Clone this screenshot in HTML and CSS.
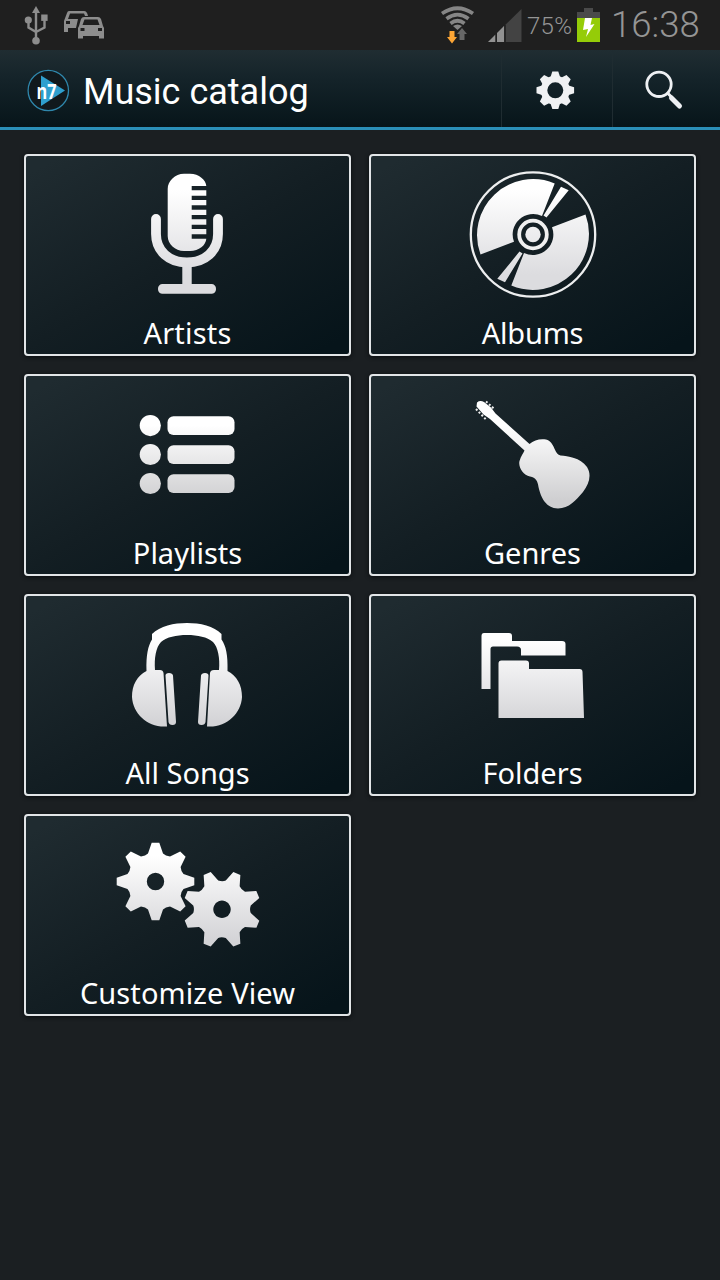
FILE: index.html
```html
<!DOCTYPE html>
<html lang="en">
<head>
<meta charset="utf-8">
<title>Music catalog</title>
<link rel="stylesheet" href="styles.css">
</head>
<body>
<svg class="defs" width="0" height="0" aria-hidden="true">
  <defs>
    <path id="gear" fill-rule="evenodd" d="M28-7.500L38.800-3.800V3.800L28 7.500Q25.500 10 25.100 14.500L30.100 24.700L24.700 30.100L14.500 25.100Q10 25.500 7.500 28L3.800 38.800H-3.800L-7.500 28Q-10 25.500-14.500 25.100L-24.700 30.100L-30.100 24.700L-25.100 14.500Q-25.500 10-28 7.500L-38.800 3.800V-3.800L-28-7.500Q-25.500-10-25.100-14.500L-30.100-24.700L-24.700-30.100L-14.500-25.100Q-10-25.500-7.500-28L-3.800-38.800H3.800L7.500-28Q10-25.500 14.500-25.100L24.700-30.100L30.100-24.700L25.100-14.500Q25.500-10 28-7.500ZM8.700 0A8.700 8.700 0 1 0-8.700 0A8.700 8.700 0 1 0 8.700 0Z"/>
    <linearGradient id="g1" gradientUnits="userSpaceOnUse" x1="0" y1="190" x2="0" y2="275"><stop offset="0" stop-color="#fff"/><stop offset="1" stop-color="#dcdcdf"/></linearGradient>
    <linearGradient id="g2" gradientUnits="userSpaceOnUse" x1="0" y1="425" x2="0" y2="500"><stop offset="0" stop-color="#fff"/><stop offset="1" stop-color="#cfcfd1"/></linearGradient>
    <linearGradient id="g3" gradientUnits="userSpaceOnUse" x1="0" y1="640" x2="0" y2="722"><stop offset="0" stop-color="#fff"/><stop offset="1" stop-color="#d4d4d7"/></linearGradient>
    <linearGradient id="g4" gradientUnits="userSpaceOnUse" x1="0" y1="-26" x2="0" y2="60"><stop offset="0" stop-color="#fff"/><stop offset="1" stop-color="#d3d3d6"/></linearGradient>
    <linearGradient id="g5" gradientUnits="userSpaceOnUse" x1="0" y1="-54" x2="0" y2="32" gradientTransform="rotate(-22.5)"><stop offset="0" stop-color="#fff"/><stop offset="1" stop-color="#d3d3d6"/></linearGradient>
  </defs>
</svg>

<header class="status-bar">
  <svg class="status-left" width="120" height="50" viewBox="0 0 120 50" aria-hidden="true">
    <g fill="none" stroke="#8d8d8d" stroke-width="2.4"><path d="M36 10V40M28.5 22V27.500L36 32M44.500 19V27.500L36 32"/></g>
    <g fill="#8d8d8d"><path d="M36 6L40 13H32Z"/><circle cx="28.3" cy="20" r="3.600"/><rect x="41.200" y="14.500" width="6.400" height="6.400"/><circle cx="36" cy="40.800" r="3.800"/></g>
    <path fill="#8d8d8d" fill-rule="evenodd" d="M69 11H84Q87 11 88 16H85L84 13.500H70L68 19H78L76 28H68V32H64V21L67 13Q67.500 11 69 11ZM66 21V24H70V21Z"/>
    <path fill="#8d8d8d" fill-rule="evenodd" d="M84 17H98Q100 17 101 19L103 26L104 28V38.500H99V36H83V38.500H78V28L79 26L81 19Q82 17 84 17ZM84.500 19.500L82.500 25H99.500L97.500 19.500ZM80.500 28V31H84.500V28ZM98 28V31H102V28Z"/>
  </svg>
  <div class="status-right">
    <svg width="86" height="50" viewBox="438 0 86 50" aria-hidden="true">
      <g fill="none" stroke="#858585" stroke-width="3.700"><path d="M442 13.500Q457.500 3 473 13.500M446.500 18.800Q457.500 10.500 468.500 18.800M450.500 23.500Q457.500 18 464.500 23.500"/></g>
      <path fill="#858585" d="M453 26Q457.500 23 462 26L457.500 30Z"/>
      <path fill="#fca535" d="M449.500 31H454.500V37H457L452 43.500L447 37H449.500Z"/>
      <path fill="#686868" d="M462 28L467 34H464.500V40H459.500V34H457Z"/>
      <path fill="#434343" d="M488 42L521.500 9V42Z"/>
      <path fill="#929292" d="M488 42L495.500 34.500V42ZM497 42V33L504 26V42Z"/><path stroke="#1f1f1f" stroke-width="1.500" d="M496.200 33V42M505 25V42"/>
    </svg>
    <span class="percent">75%</span>
    <svg class="battery" width="24" height="50" viewBox="576 0 24 50" aria-hidden="true">
      <path fill="#4a4a4a" d="M584 8H593V12H600V18H577V12H584Z"/><path fill="#95cc08" d="M577 18H600V42H577Z"/>
      <path fill="#fff" d="M585 18H592L590.500 25L594.500 24L586 37L588 29L583 30Z"/>
    </svg>
    <span class="clock">16:38</span>
  </div>
</header>

<nav class="action-bar">
  <svg class="logo" width="44" height="44" viewBox="26 68 44 44" aria-label="n7">
    <circle cx="48.300" cy="90.500" r="20.200" fill="#11191d" stroke="#2f87ac" stroke-width="1.300"/>
    <path d="M41 75.500L65 90.500L41 106Z" fill="#2f9fce"/>
    <text class="logo-text" x="36.500" y="98.500" textLength="20" lengthAdjust="spacingAndGlyphs">n7</text>
  </svg>
  <h1 class="title">Music catalog</h1>
  <button class="action" aria-label="Settings">
    <svg width="110" height="76" viewBox="502 51 110 76">
      <g transform="translate(555.300 90.300)" fill="#f0f1f3">
        <path fill-rule="evenodd" d="M14.500 0A14.500 14.500 0 1 0-14.500 0A14.500 14.500 0 1 0 14.500 0ZM8 0A8 8 0 1 1-8 0A8 8 0 1 1 8 0Z"/>
        <g id="pair"><path id="nub" d="M-5-12.500L-3-18.800H3L5-12.500Z"/><use href="#nub" transform="rotate(45)"/><use href="#nub" transform="rotate(90)"/><use href="#nub" transform="rotate(135)"/></g>
        <use href="#pair" transform="rotate(180)"/>
      </g>
    </svg>
  </button>
  <button class="action search" aria-label="Search">
    <svg width="107" height="76" viewBox="613 51 107 76" fill="none" stroke="#eef0f3" stroke-linecap="round">
      <circle cx="659" cy="84.300" r="12.200" stroke-width="2.800"/><path stroke-width="3" d="M668 93.500L671 96.500"/><path stroke-width="5" d="M671.500 98L679.500 106"/>
    </svg>
  </button>
</nav>

<main class="grid">
  <a class="tile">
    <svg class="icon" viewBox="26 156 323 160" fill="url(#g1)">
      <path d="M184 173.700H190C199 173.700 206 180 206.300 186H191.700V190.300H206.300V195.700H191.700V200H206.300V205.300H191.700V209.700H206.300V215H191.700V219.300H206.300V224.700H191.700V229H206.300V234.300H191.700V238.700H206.300C206 245 199 251 190 251H184C175 251 167.700 244 167.700 236V189C167.700 181 175 173.700 184 173.700Z"/>
      <path fill="none" stroke="url(#g1)" stroke-width="9.800" stroke-linecap="round" d="M156 219V234C156 251 169 262.500 187 262.500S218 251 218 234V219"/>
      <path d="M182.300 264H191.700V284H212A5 5 0 0 1 212 293.800H162A5 5 0 0 1 162 284H182.300Z"/>
    </svg>
    <span class="label artists">Artists</span>
  </a>
  <a class="tile">
    <svg class="icon" viewBox="371 156 323 160" fill="url(#g1)">
      <circle cx="533" cy="234.500" r="62.200" fill="none" stroke="#edeeef" stroke-width="2.300"/>
      <path d="M554.700 183.500A56 56 0 0 0 480.500 254.500L514 241.800A20.500 20.500 0 0 1 542 216ZM511.300 285.500A56 56 0 0 0 585.500 214.500L552 227.200A20.500 20.500 0 0 1 524 253Z"/>
      <path d="M561 186.800L568.700 190.200L546.500 217.500L543.500 215.500ZM505 282.200L497.300 278.800L519.500 251.500L522.500 253.500Z"/>
      <circle cx="533" cy="234.500" r="13.800" fill="none" stroke="#f0f0f0" stroke-width="3.800"/><circle cx="533" cy="234.500" r="7.700"/>
    </svg>
    <span class="label albums">Albums</span>
  </a>
  <a class="tile">
    <svg class="icon" viewBox="26 376 323 160" fill="url(#g2)">
      <circle cx="150.300" cy="425.600" r="10.600"/><circle cx="150.300" cy="454.500" r="10.600"/><circle cx="150.300" cy="483.500" r="10.600"/>
      <rect x="167.500" y="416.300" width="67" height="18.700" rx="6"/><rect x="167.500" y="445.200" width="67" height="18.700" rx="6"/><rect x="167.500" y="474.200" width="67" height="18.700" rx="6"/>
    </svg>
    <span class="label playlists">Playlists</span>
  </a>
  <a class="tile">
    <svg class="icon" viewBox="371 376 323 160" fill="url(#g2)">
      <path d="M477 402.500Q480 400 484 402L491 407.500L495.500 413.500L529.500 444C534 440 540 438.500 546 439.500C555 442 554 454 560.500 455.500C568 456.500 580 457 587 467C592 475 589 484 583 492C576 500 569 508.500 558 508.500C546 508 541 498 538.500 487C537.500 481 536 477.500 530 476.500C523 475 518 467 519.500 461C521 456 523.500 453 524.500 450.500L490 419L483.500 414.500L476.500 406.500Z"/>
      <path fill="none" stroke="#eee" stroke-width="2" stroke-dasharray="2 2" d="M486 401.500L495 409.500M476 409L486 419.500"/>
    </svg>
    <span class="label genres">Genres</span>
  </a>
  <a class="tile">
    <svg class="icon" viewBox="26 596 323 160" fill="url(#g3)">
      <path d="M152 634C160 626 174 623 187 623S214 626 221.500 634V639.500C226 646 228 655 227.500 671C237 676 242 685 242 697C241 714 226 728 207 726.500L210 673Q210.500 670 214 670H219C220 658 218 647 213 642C207 637 198 635 187 635S167 637 161 642C156 647 154 658 155 670H160Q163 670 163.500 673L167 726.500C148 728 133 714 132 697C132 685 137 676 146.500 671C146 655 148 646 152 639.500Z"/>
      <path d="M165.500 675.500Q165.500 673 169 673Q172.500 673 173 675.500L176 722Q176 725 172.500 725Q169 725 168.500 722ZM208.500 675.500Q208.500 673 205 673Q201.500 673 201 675.500L198 722Q198 725 201.500 725Q205 725 205.500 722Z"/>
    </svg>
    <span class="label songs">All Songs</span>
  </a>
  <a class="tile">
    <svg class="icon" viewBox="371 596 323 160" fill="url(#g3)">
      <path d="M484 633H509Q512 633 512 636V641H562Q565.500 641 565.500 644V655.500H521V650Q521 646.500 517 646.500H493Q490.500 646.500 490.500 649V689H481.500V636Q481.500 633 484 633Z"/>
      <path d="M501.500 660.500H526Q529 660.500 529 663.500V669H579.500Q582.500 669 582.500 672L584 718H498.500V663.500Q498.500 660.500 501.500 660.500Z"/>
    </svg>
    <span class="label folders">Folders</span>
  </a>
  <a class="tile">
    <svg class="icon" viewBox="26 816 323 160">
      <use href="#gear" transform="translate(155.500 881.500)" fill="url(#g4)"/>
      <use href="#gear" transform="translate(222 909.300) rotate(22.500)" fill="url(#g5)"/>
    </svg>
    <span class="label customize">Customize View</span>
  </a>
</main>
</body>
</html>
```
FILE: styles.css
```css
* { box-sizing: border-box; }
body {
  margin: 0;
  height: 1280px;
  overflow: hidden;
  background: #1b1f22;
  color: #fff;
  font-family: Roboto, "Noto Sans", sans-serif;
}
svg { display: block; }
.defs { position: absolute; }
.status-bar {
  display: flex;
  justify-content: space-between;
  height: 50px;
  background: #1f1f1f;
  color: #959595;
  font-weight: 300;
}
.status-right { display: flex; width: 282px; }
.percent { width: 52px; padding-left: 3px; font-size: 24px; line-height: 53px; letter-spacing: 0.3px; white-space: nowrap; }
.clock { padding-left: 11px; font-size: 36.5px; line-height: 50px; white-space: nowrap; }
.battery { flex: none; }
.action-bar {
  display: flex;
  align-items: stretch;
  height: 80px;
  background: linear-gradient(#202d32, #15242a 35%, #07151a);
  border-bottom: 3px solid #2b8fb8;
}
.logo { flex: none; margin: 18px 0 0 26px; }
.logo-text { font: bold 22px "Open Sans", sans-serif; fill: #fff; }
.title {
  flex: 1;
  margin: 0 0 0 13px;
  font-size: 36px;
  font-weight: 400;
  line-height: 84px;
  white-space: nowrap;
}
.action {
  flex: none;
  width: 111px;
  padding: 0;
  border: 0;
  border-left: 1px solid #1f2c31;
  background: none;
}
.action.search { width: 108px; }
.grid {
  display: grid;
  grid-template-columns: 327px 327px;
  grid-auto-rows: 202px;
  gap: 18px;
  padding: 24px;
}
.tile {
  display: flex;
  flex-direction: column;
  align-items: center;
  border: 2px solid #e2e5e7;
  border-radius: 4px;
  background: linear-gradient(150deg, #1f2b30 5%, #131e23 50%, #06141a 95%);
  box-shadow: 0 1px 4px #090c0e;
}
.icon { width: 323px; height: 160px; }
.label {
  height: 38px;
  font: 400 29px/33px "Noto Sans", sans-serif;
  white-space: nowrap;
}
.artists { letter-spacing: 0.2px; }
.albums { letter-spacing: -0.2px; }
.customize { letter-spacing: 0.1px; }
```
